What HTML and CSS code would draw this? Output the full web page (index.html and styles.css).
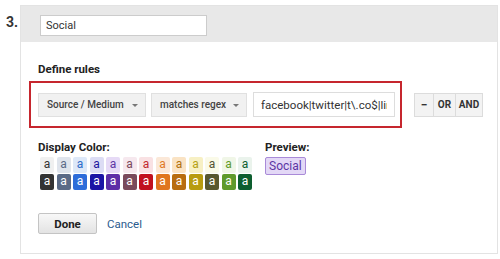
FILE: index.html
```html
<!DOCTYPE html>
<html lang="en">
<head>
  <meta charset="UTF-8">
  <title>Channel Definition</title>
  <link rel="stylesheet" href="styles.css">
</head>
<body>

<div class="channel-row">
  <div class="step-num">3.</div>

  <div class="panel">
    <div class="panel-head">
      <input type="text" class="name-input" value="Social">
    </div>

    <div class="panel-body">
      <div class="section-title">Define rules</div>

      <div class="rule-line">
        <div class="rule-box">
          <div class="select select-dim">Source / Medium <span class="caret"></span></div>
          <div class="select select-op">matches regex <span class="caret"></span></div>
          <input type="text" class="value-input" value="facebook|twitter|t\.co$|linkedin">
        </div>

        <div class="logic-group">
          <button class="logic-btn btn-minus">&minus;</button>
          <button class="logic-btn btn-or">OR</button>
          <button class="logic-btn btn-and">AND</button>
        </div>
      </div>

      <div class="color-row">
        <div class="color-col">
          <div class="section-title">Display Color:</div>
          <div class="swatches">
            <span class="sw l1">a</span>
            <span class="sw l2">a</span>
            <span class="sw l3">a</span>
            <span class="sw l4">a</span>
            <span class="sw l5">a</span>
            <span class="sw l6">a</span>
            <span class="sw l7">a</span>
            <span class="sw l8">a</span>
            <span class="sw l9">a</span>
            <span class="sw l10">a</span>
            <span class="sw l11">a</span>
            <span class="sw l12">a</span>
            <span class="sw l13">a</span>
            <span class="sw d1">a</span>
            <span class="sw d2">a</span>
            <span class="sw d3">a</span>
            <span class="sw d4">a</span>
            <span class="sw d5">a</span>
            <span class="sw d6">a</span>
            <span class="sw d7">a</span>
            <span class="sw d8">a</span>
            <span class="sw d9">a</span>
            <span class="sw d10">a</span>
            <span class="sw d11">a</span>
            <span class="sw d12">a</span>
            <span class="sw d13">a</span>
          </div>
        </div>

        <div class="preview-col">
          <div class="section-title">Preview:</div>
          <span class="preview-chip">Social</span>
        </div>
      </div>

      <div class="actions">
        <button class="done-btn">Done</button>
        <a class="cancel-link" href="#">Cancel</a>
      </div>
    </div>
  </div>
</div>

</body>
</html>
```

FILE: styles.css
```css
body {
  margin: 0;
  background: #fff;
  font-family: Roboto, "Liberation Sans", Arial, sans-serif;
  color: #333;
}

.channel-row {
  display: flex;
  align-items: flex-start;
}

.step-num {
  width: 20px;
  padding: 14px 0 0 6px;
  box-sizing: border-box;
  font-size: 14px;
  font-weight: bold;
  color: #333;
}

.panel {
  width: 478px;
  margin-top: 5px;
  border: 1px solid #e3e3e3;
  box-sizing: border-box;
}

.panel-head {
  height: 36px;
  background: #e8e8e8;
  padding: 8px 0 0 19px;
  box-sizing: border-box;
}

.name-input {
  width: 167px;
  height: 21px;
  box-sizing: border-box;
  border: 1px solid #ccc;
  padding: 0 5px;
  font-family: inherit;
  font-size: 11px;
  color: #333;
  outline: none;
}

.panel-body {
  padding: 19px 8px 19px 8px;
}

.section-title {
  font-size: 11.5px;
  font-weight: bold;
  line-height: 16px;
  color: #222;
  margin-left: 9px;
}

.rule-line {
  display: flex;
  align-items: center;
  margin-top: 4px;
}

.rule-box {
  display: flex;
  align-items: center;
  width: 373px;
  height: 47px;
  box-sizing: border-box;
  border: 2px solid #c6262e;
  padding: 0 5px 0 7px;
  gap: 5px;
}

.select {
  position: relative;
  height: 24px;
  box-sizing: border-box;
  background: #f1f1f1;
  border: 1px solid #e0e0e0;
  font-size: 10px;
  font-weight: 500;
  line-height: 22px;
  color: #444;
  padding-left: 8px;
}

.select-dim { width: 108px; }
.select-op { width: 96px; }

.caret {
  position: absolute;
  right: 7px;
  top: 10px;
  border-left: 3px solid transparent;
  border-right: 3px solid transparent;
  border-top: 3px solid #777;
}

.value-input {
  width: 142px;
  height: 25px;
  box-sizing: border-box;
  border: 1px solid #ddd;
  margin-left: 1px;
  padding: 0 7px;
  font-family: inherit;
  font-size: 11.5px;
  color: #333;
  outline: none;
}

.logic-group {
  display: flex;
  margin-left: 12px;
}

.logic-btn {
  height: 24px;
  box-sizing: border-box;
  background: #f3f3f3;
  border: 1px solid #dcdcdc;
  border-left: none;
  padding: 0;
  font-family: inherit;
  font-size: 10px;
  font-weight: bold;
  color: #333;
}

.btn-minus { width: 20px; border-left: 1px solid #dcdcdc; font-size: 12px; }
.btn-or { width: 22px; }
.btn-and { width: 27px; }

.color-row {
  display: flex;
  margin-top: 11px;
}

.color-col {
  width: 236px;
}

.swatches {
  display: grid;
  grid-template-columns: repeat(13, 14px);
  column-gap: 2.5px;
  row-gap: 1px;
  margin: 2px 0 0 11px;
}

.sw {
  height: 16px;
  border-radius: 2px;
  font-size: 12px;
  line-height: 15px;
  text-align: center;
}

.l1 { background: #f0f0f0; color: #333; }
.l2 { background: #dfe4ec; color: #5b6b87; }
.l3 { background: #dde8f8; color: #2d6cc9; }
.l4 { background: #dcdcf4; color: #1c189e; }
.l5 { background: #e6daf6; color: #5d35a4; }
.l6 { background: #f6e8ee; color: #7a4a5c; }
.l7 { background: #f9e1e3; color: #c1272d; }
.l8 { background: #fbe8d8; color: #e07a27; }
.l9 { background: #fae3c4; color: #b0700f; }
.l10 { background: #f7f0c4; color: #b5a013; }
.l11 { background: #fafae8; color: #555533; }
.l12 { background: #f0f6e7; color: #5f9a2c; }
.l13 { background: #eaf3ec; color: #0d5e2f; }

.d1 { background: #333333; color: #fff; }
.d2 { background: #5b6b87; color: #fff; }
.d3 { background: #2d6cd9; color: #fff; }
.d4 { background: #1b14a5; color: #fff; }
.d5 { background: #5d2ea7; color: #fff; }
.d6 { background: #7a4a5c; color: #fff; }
.d7 { background: #c1101e; color: #fff; }
.d8 { background: #e0761e; color: #fff; }
.d9 { background: #b86d10; color: #fff; }
.d10 { background: #b89c10; color: #fff; }
.d11 { background: #585830; color: #fff; }
.d12 { background: #5f9a2c; color: #fff; }
.d13 { background: #0d5e2f; color: #fff; }

.preview-col .section-title {
  margin-left: 0;
}

.preview-chip {
  display: inline-block;
  margin-top: 2px;
  height: 18px;
  box-sizing: border-box;
  padding: 0 3px;
  background: #e3d8f6;
  border: 1px solid #a98ad8;
  border-radius: 2px;
  font-size: 12px;
  line-height: 16px;
  color: #5d35a4;
}

.actions {
  display: flex;
  align-items: center;
  margin: 23px 0 0 9px;
}

.done-btn {
  width: 59px;
  height: 21px;
  box-sizing: border-box;
  background: linear-gradient(#f8f8f8, #e3e3e3);
  border: 1px solid #c4c4c4;
  border-radius: 2px;
  font-family: inherit;
  font-size: 11.5px;
  font-weight: bold;
  color: #222;
  padding: 0;
}

.cancel-link {
  margin-left: 10px;
  font-size: 11.5px;
  color: #2b5b8e;
  text-decoration: none;
}
```
